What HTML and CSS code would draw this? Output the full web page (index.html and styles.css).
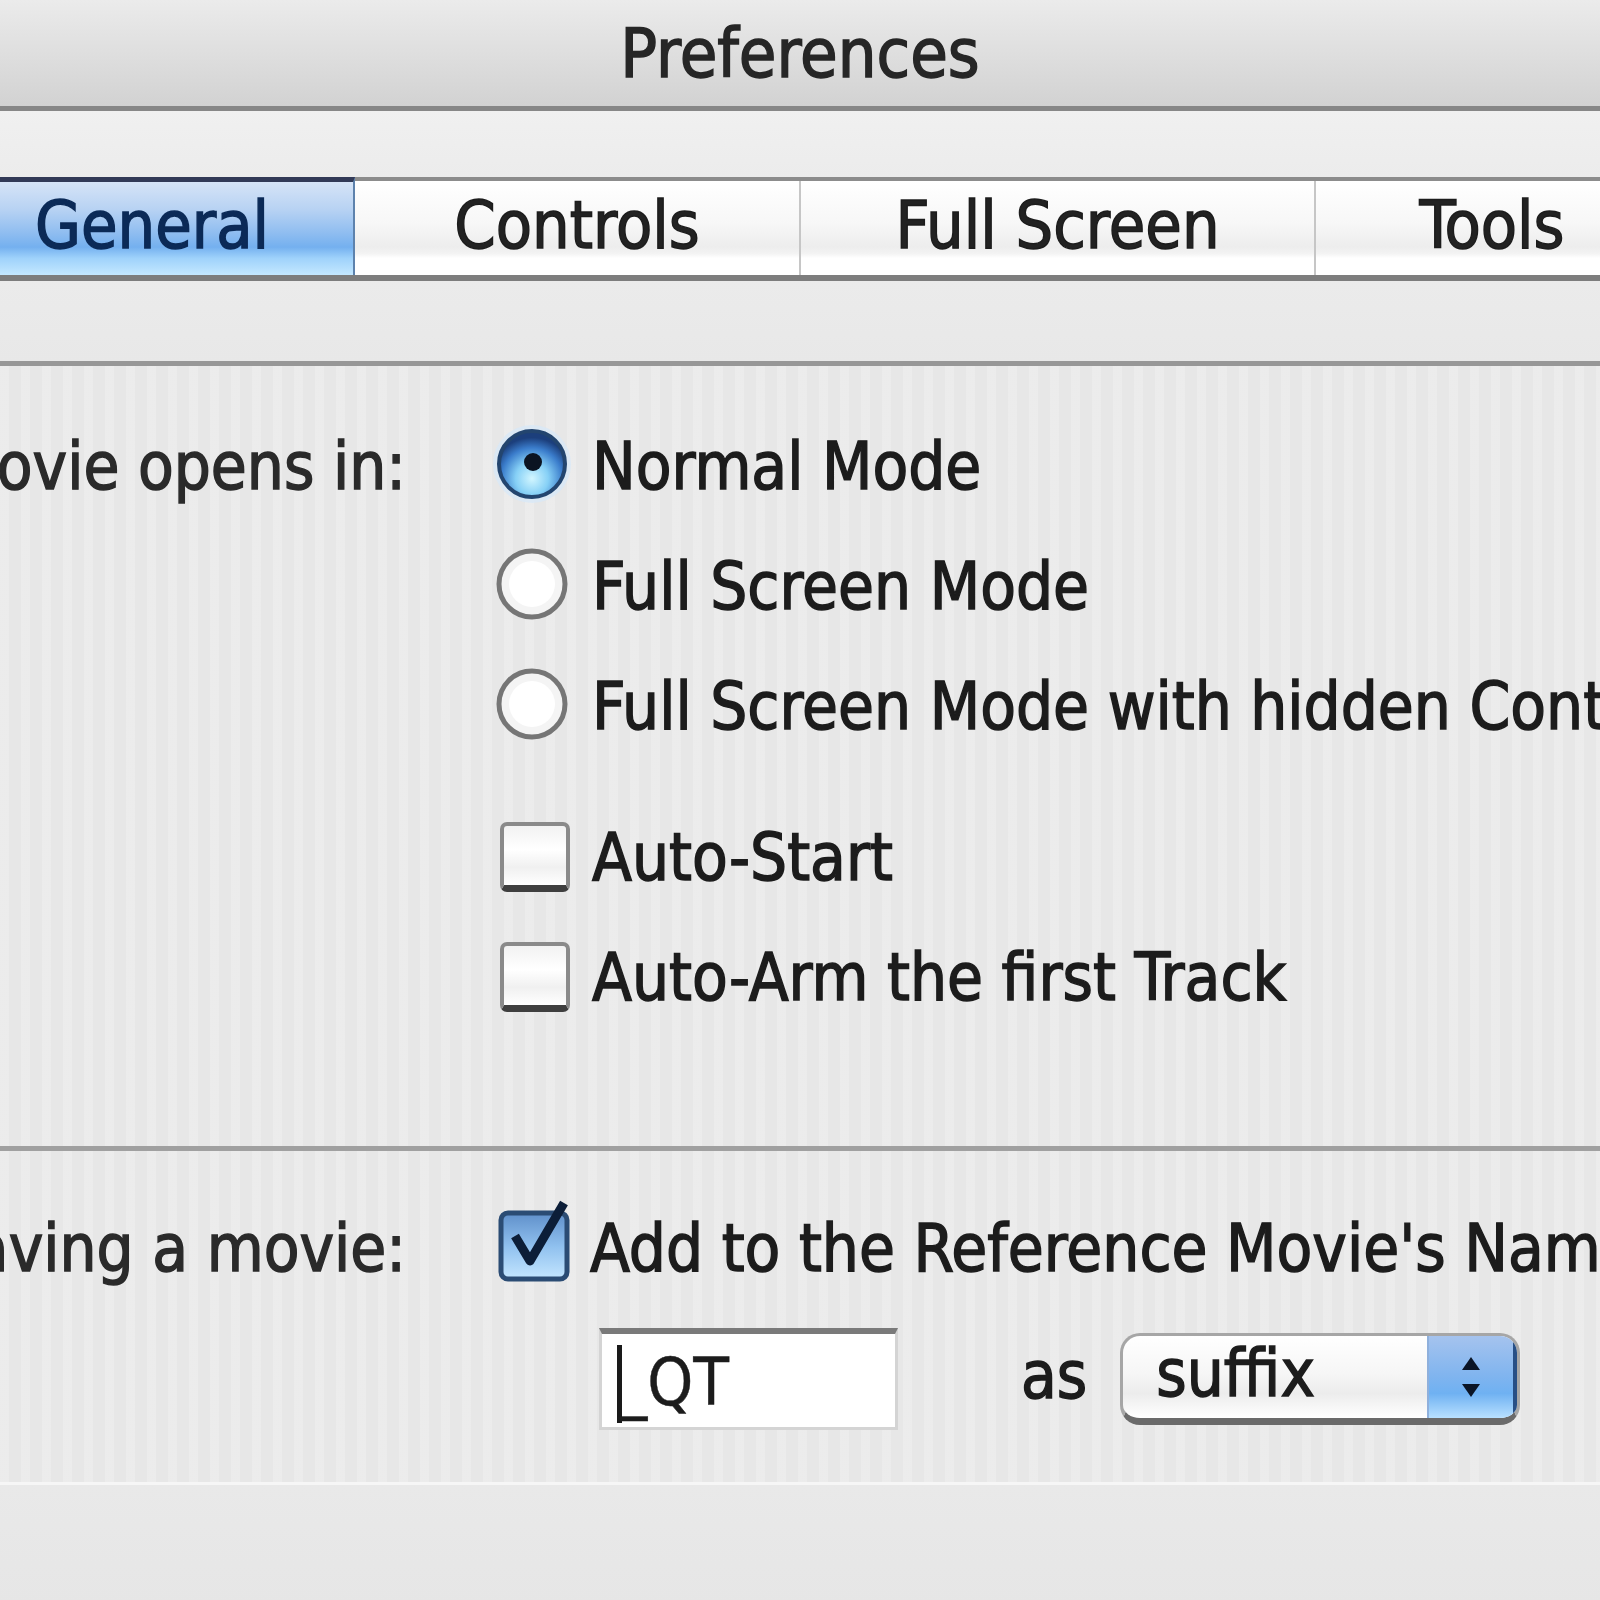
FILE: index.html
```html
<!DOCTYPE html>
<html lang="en">
<head>
<meta charset="utf-8">
<title>Preferences</title>
<link rel="stylesheet" href="styles.css">
</head>
<body>
<div class="window">
  <header class="titlebar"><span class="title">Preferences</span></header>
  <div class="strip"></div>
  <nav class="tabs">
    <div class="tab tab-active">General</div>
    <div class="tab tab-controls">Controls</div>
    <div class="tab tab-full">Full Screen</div>
    <div class="tab tab-tools">Tools</div>
  </nav>
  <div class="tab-gap"></div>

  <section class="group group-open">
    <div class="label-cell"><span class="label">Movie opens in:</span></div>
    <div class="options">
      <div class="opt">
        <svg class="radio" viewBox="0 0 80 80" width="80" height="80" aria-hidden="true">
          <defs>
            <radialGradient id="rOn" cx="50%" cy="72%" r="62%">
              <stop offset="0" stop-color="#d2f6ff"/>
              <stop offset="0.4" stop-color="#86d0f6"/>
              <stop offset="0.75" stop-color="#3a7ccb"/>
              <stop offset="1" stop-color="#1c3f7c"/>
            </radialGradient>
          </defs>
          <circle cx="40" cy="40" r="39" fill="#d6e8fa" opacity="0.7"/>
          <circle cx="40" cy="40" r="33" fill="url(#rOn)" stroke="#23456f" stroke-width="4"/>
          <circle cx="41" cy="38" r="9" fill="#0b1422"/>
        </svg>
        <span class="opt-text">Normal Mode</span>
      </div>
      <div class="opt">
        <svg class="radio" viewBox="0 0 80 80" width="80" height="80" aria-hidden="true">
          <circle cx="40" cy="40" r="33" fill="#f4f4f4" stroke="#767676" stroke-width="5"/>
          <circle cx="40" cy="40" r="23" fill="#ffffff"/>
        </svg>
        <span class="opt-text">Full Screen Mode</span>
      </div>
      <div class="opt">
        <svg class="radio" viewBox="0 0 80 80" width="80" height="80" aria-hidden="true">
          <circle cx="40" cy="40" r="33" fill="#f4f4f4" stroke="#767676" stroke-width="5"/>
          <circle cx="40" cy="40" r="23" fill="#ffffff"/>
        </svg>
        <span class="opt-text">Full Screen Mode with hidden Controls</span>
      </div>
      <div class="opt opt-first-check">
        <span class="check"></span>
        <span class="opt-text">Auto-Start</span>
      </div>
      <div class="opt">
        <span class="check"></span>
        <span class="opt-text">Auto-Arm the first Track</span>
      </div>
    </div>
  </section>

  <section class="group group-save">
    <div class="label-cell"><span class="label">When saving a movie:</span></div>
    <div class="options">
      <div class="opt">
        <svg class="check-on" viewBox="0 0 72 84" width="72" height="84" aria-hidden="true">
          <defs>
            <linearGradient id="cOn" x1="0" y1="0" x2="0" y2="1">
              <stop offset="0" stop-color="#5f8fca"/>
              <stop offset="0.5" stop-color="#8fc0ee"/>
              <stop offset="1" stop-color="#c4e6ff"/>
            </linearGradient>
          </defs>
          <rect x="3" y="14" width="66" height="66" rx="7" fill="url(#cOn)" stroke="#2b4c74" stroke-width="5"/>
          <path d="M17 37 L32 62 L66 4" fill="none" stroke="#0c1e38" stroke-width="9" stroke-linejoin="round"/>
        </svg>
        <span class="opt-text">Add to the Reference Movie's Name</span>
      </div>
      <div class="field-row">
        <div class="textfield"><span class="caret"></span><span class="field-text">_QT</span></div>
        <span class="as">as</span>
        <div class="popup">
          <span class="popup-text">suffix</span>
          <span class="stepper">
            <svg viewBox="0 0 24 50" width="24" height="50" aria-hidden="true">
              <path d="M12 5 L21 18 L3 18 Z" fill="#0b1526"/>
              <path d="M12 45 L21 32 L3 32 Z" fill="#0b1526"/>
            </svg>
          </span>
        </div>
      </div>
    </div>
  </section>
  <div class="bottom-line"></div>
</div>
</body>
</html>
```

FILE: styles.css
```css
html, body {
  margin: 0;
  padding: 0;
}
body {
  width: 1600px;
  height: 1600px;
  overflow: hidden;
  background-color: #e7e7e7;
  background-image: repeating-linear-gradient(90deg, rgba(255,255,255,0.2) 0 9px, rgba(0,0,0,0) 9px 21px);
  font-family: "DejaVu Sans Condensed", "DejaVu Sans", sans-serif;
  font-stretch: condensed;
  font-size: 65px;
  color: #1c1c1c;
  -webkit-text-stroke: 1.4px #1c1c1c;
}
.window {
  display: flex;
  flex-direction: column;
  width: 1600px;
}
.titlebar {
  height: 106px;
  border-bottom: 5px solid #878787;
  background: linear-gradient(#ebebeb, #dcdcdc 60%, #d2d2d2);
  display: flex;
  justify-content: center;
  align-items: center;
}
.title {
  font-size: 68px;
  line-height: 1;
  padding-top: 2px;
  color: #262626;
  -webkit-text-stroke: 1.4px #262626;
}
.strip {
  height: 66px;
  background: linear-gradient(#f0f0f0, #ececec);
}
.tabs {
  display: flex;
  height: 94px;
  border-top: 4px solid #8c8c8c;
  border-bottom: 6px solid #7d7d7d;
}
.tab {
  flex: none;
  display: flex;
  align-items: center;
  justify-content: center;
  box-sizing: border-box;
  padding-bottom: 6px;
  font-size: 66px;
  background: linear-gradient(#ffffff 0%, #f7f7f7 45%, #ededed 70%, #f3f3f3 77%, #ffffff 82%, #ffffff 100%);
  border-right: 2px solid #c6c6c6;
  color: #222;
}
.tab-active {
  width: 404px;
  margin-left: -49px;
  margin-top: -4px;
  border-top: 5px solid #323a57;
  border-right: 2px solid #5d82ad;
  background: linear-gradient(#d6e4f7 0%, #b7d2f3 30%, #8fbdf0 55%, #74b0ef 70%, #9fd2fb 82%, #c4e8ff 100%);
  color: #0b2a57;
  -webkit-text-stroke: 1.4px #0b2a57;
}
.tab-controls { width: 446px; }
.tab-full { width: 515px; }
.tab-tools { width: 354px; }

.tab-gap {
  height: 80px;
  background: linear-gradient(#ebebeb, #e8e8e8);
  border-bottom: 5px solid #979797;
}

.group {
  display: grid;
  grid-template-columns: 406px 1fr;
  column-gap: 92px;
  align-items: start;
}
.group-open {
  padding-top: 40px;
  padding-bottom: 109px;
  border-bottom: 5px solid #a0a0a0;
}
.group-save {
  padding-top: 37px;
  padding-bottom: 52px;
  border-bottom: 3px solid #f6f6f6;
}
.label-cell {
  height: 120px;
  display: flex;
  justify-content: flex-end;
  align-items: center;
  white-space: nowrap;
  min-width: 0;
}
.label {
  color: #2a2a2a;
  -webkit-text-stroke: 1.4px #2a2a2a;
}
.options {
  display: flex;
  flex-direction: column;
}
.opt {
  height: 120px;
  display: flex;
  align-items: center;
  white-space: nowrap;
}
.opt-first-check {
  margin-top: 31px;
}
.opt-text {
  margin-left: 20px;
}
.radio {
  flex: none;
  margin-left: -6px;
  margin-top: -4px;
}
.check {
  flex: none;
  box-sizing: border-box;
  width: 70px;
  height: 70px;
  margin-left: 2px;
  margin-right: 2px;
  border: 4px solid #8a8a8a;
  border-bottom: 7px solid #3f3f3f;
  border-radius: 7px;
  background: linear-gradient(#f2f2f2, #ffffff 40%, #f0f0f0 70%, #ffffff);
}
.check-on {
  flex: none;
  margin-left: 0;
  margin-top: -14px;
}
.field-row {
  display: flex;
  align-items: center;
  margin-top: 20px;
  margin-left: 101px;
}
.textfield {
  box-sizing: border-box;
  width: 299px;
  height: 102px;
  background: #ffffff;
  border: 3px solid #d4d4d4;
  border-top: 6px solid #7a7a7a;
  display: flex;
  align-items: center;
  padding-left: 15px;
}
.caret {
  display: block;
  width: 5px;
  height: 78px;
  background: #1a1a1a;
  margin-top: 6px;
}
.field-text {
  -webkit-text-stroke: 0.4px #1c1c1c;
  margin-left: -4px;
  margin-top: 4px;
}
.as {
  margin-left: 123px;
  padding-bottom: 8px;
}
.popup {
  box-sizing: border-box;
  margin-left: 33px;
  width: 400px;
  height: 92px;
  border-radius: 20px;
  border: 3px solid #a6a6a6;
  border-bottom: 7px solid #6a6a6a;
  background: linear-gradient(#ffffff, #f6f6f6 45%, #ececec 70%, #ffffff);
  display: flex;
  align-items: center;
  overflow: hidden;
}
.popup-text {
  flex: 1;
  padding-left: 33px;
  padding-bottom: 8px;
}
.stepper {
  align-self: stretch;
  width: 84px;
  display: flex;
  align-items: center;
  justify-content: center;
  background: linear-gradient(#a5c3ee, #7fb4ef 50%, #6fb1f2 70%, #b8e0ff);
  border-left: 2px solid #8fb0dc;
  border-right: 4px solid #274f86;
}
.bottom-line {
  height: 120px;
  background: linear-gradient(#e9e9e9, #e6e6e6);
}
```
